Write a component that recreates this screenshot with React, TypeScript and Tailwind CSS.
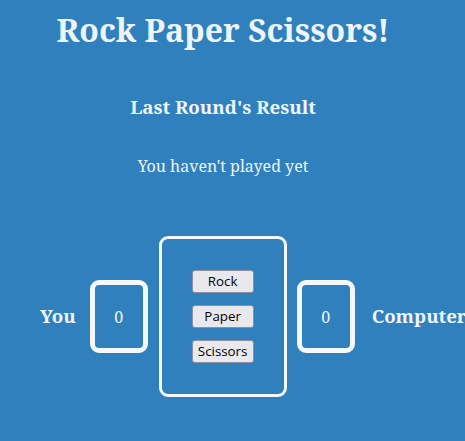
import React from 'react';

const serif = { fontFamily: '"Noto Serif", "DejaVu Serif", serif' };

const ScoreBox = ({ score }: { score: number }) => (
  <div className="shrink-0 w-[58px] h-[73px] border-[5px] border-[#f4f8fc] rounded-[9px] flex items-center justify-center text-[16px] text-[#eef4fa]">
    {score}
  </div>
);

const choices = ['Rock', 'Paper', 'Scissors'];

export default function App() {
  return (
    <div className="w-[465px] h-[441px] bg-[#2f80bd] overflow-hidden text-[#eef4fa]" style={serif}>
      <div className="w-[446px] flex flex-col items-center">
        <h1 className="mt-[11px] text-[32px] leading-[38px] font-bold">Rock Paper Scissors!</h1>
        <h3 className="mt-[46px] text-[18.72px] leading-[24px] font-bold">Last Round's Result</h3>
        <p className="mt-[35px] text-[16px] leading-[24px]">You haven't played yet</p>

        <div className="self-stretch mt-[58px] pl-[40px] flex items-center whitespace-nowrap">
          <span className="shrink-0 text-[18.72px] font-bold">You</span>
          <div className="shrink-0 ml-[14px]">
            <ScoreBox score={0} />
          </div>
          <div className="shrink-0 ml-[11px] w-[128px] h-[161px] border-[3px] border-[#f4f8fc] rounded-[9px] flex flex-col items-center justify-center gap-[12px]">
            {choices.map((c) => (
              <button
                key={c}
                className="shrink-0 w-[62px] h-[23px] bg-[#e9e9ed] border border-[#8f8f9d] rounded-[3px] text-[13.33px] text-black leading-none"
                style={{ fontFamily: '"Open Sans", "Noto Sans", sans-serif' }}
              >
                {c}
              </button>
            ))}
          </div>
          <div className="shrink-0 ml-[10px]">
            <ScoreBox score={0} />
          </div>
          <span className="shrink-0 ml-[17px] text-[18.72px] font-bold">Computer</span>
        </div>
      </div>
    </div>
  );
}
